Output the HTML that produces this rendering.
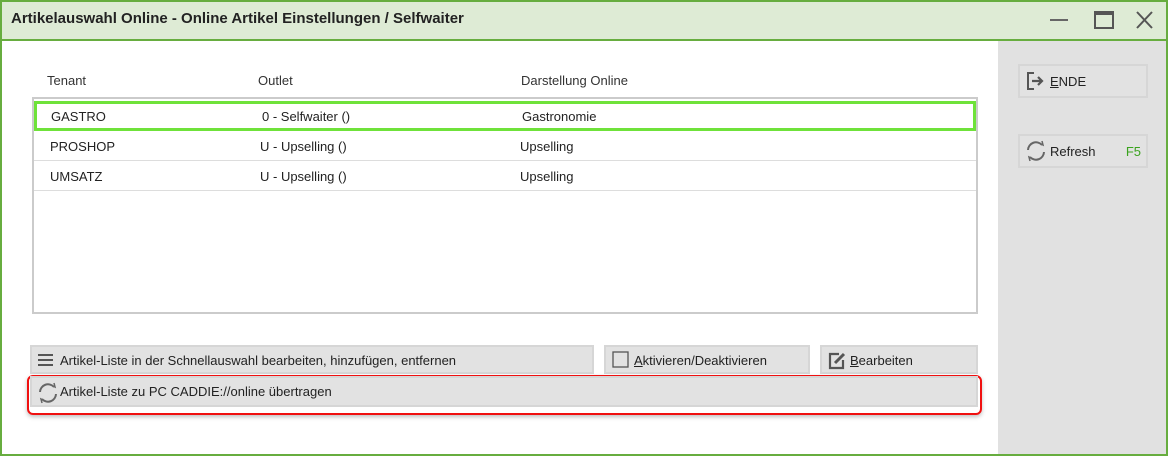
<!DOCTYPE html>
<html><head><style>
*{box-sizing:border-box;margin:0;padding:0}
body{width:1168px;height:456px;overflow:hidden;font-family:"Liberation Sans",sans-serif;font-size:13px;color:#222;background:#fff}
.win{position:absolute;left:0;top:0;width:1168px;height:456px;background:#fff}
.frame{position:absolute;left:0;top:0;width:1168px;height:456px;border:2px solid #67ad3f;pointer-events:none}
.title{position:absolute;left:0;top:0;width:1168px;height:41px;background:#deebd5;border-bottom:2px solid #67ad3f;font-weight:bold;font-size:15px;line-height:38px;padding-left:11px;color:#222}
.side{position:absolute;left:998px;top:41px;width:168px;height:413px;background:#e1e1e1}
.abs{position:absolute}
.hdr{top:73px;color:#333}
.list{position:absolute;left:32px;top:97px;width:946px;height:217px;border:2px solid #cbcbcb;background:#fff}
.row{position:absolute;left:0;width:942px;height:30px;border-bottom:1px solid #ddd}
.row span{position:absolute;top:8px}
.sel{border:3px solid #6fe23a;height:30px;top:2px}
.btn{position:absolute;background:#e2e2e2;border:2px solid #d6d6d6;height:29px;line-height:27px;padding-left:28px;color:#222}
.btn svg{position:absolute;left:5px;top:4px}
</style></head><body>
<div class="win">
<div class="title">Artikelauswahl Online - Online Artikel Einstellungen / Selfwaiter
<svg class="abs" style="left:1048px;top:9px" width="110" height="22"><line x1="2" y1="11" x2="20" y2="11" stroke="#666" stroke-width="2"/><rect x="47" y="3" width="18" height="16" fill="none" stroke="#555" stroke-width="2"/><rect x="47" y="3" width="18" height="3" fill="#555"/><path d="M89 3L104 19M104 3L89 19" stroke="#555" stroke-width="2"/></svg></div>
<div class="side"></div>
<div class="abs hdr" style="left:47px">Tenant</div>
<div class="abs hdr" style="left:258px">Outlet</div>
<div class="abs hdr" style="left:521px">Darstellung Online</div>
<div class="list">
<div class="row sel" style="left:0"><span style="left:14px;top:5px">GASTRO</span><span style="left:225px;top:5px">0 - Selfwaiter ()</span><span style="left:485px;top:5px">Gastronomie</span></div>
<div class="row" style="top:32px"><span style="left:16px">PROSHOP</span><span style="left:226px">U - Upselling ()</span><span style="left:486px">Upselling</span></div>
<div class="row" style="top:62px"><span style="left:16px">UMSATZ</span><span style="left:226px">U - Upselling ()</span><span style="left:486px">Upselling</span></div>
</div>
<div class="btn" style="left:30px;top:345px;width:564px"><svg width="18" height="18"><path d="M1 4H16M1 9H16M1 14H16" stroke="#555" stroke-width="2"/></svg>Artikel-Liste in der Schnellauswahl bearbeiten, hinzufügen, entfernen</div>
<div class="btn" style="left:604px;top:345px;width:206px"><svg width="18" height="18"><rect x="2" y="1" width="15" height="15" fill="none" stroke="#555" stroke-width="1.3"/></svg><u>A</u>ktivieren/Deaktivieren</div>
<div class="btn" style="left:820px;top:345px;width:158px"><svg width="20" height="20"><path d="M12 3H3V17H16V9" fill="none" stroke="#555" stroke-width="2.2"/><path d="M8 12L17 3" stroke="#555" stroke-width="3"/></svg><u>B</u>earbeiten</div>
<div class="abs" style="left:27px;top:375px;width:955px;height:40px;border:2px solid #f01010;border-radius:6px;box-shadow:0 2px 4px rgba(0,0,0,.25)"></div>
<div class="btn" style="left:30px;top:376px;width:948px;height:31px"><svg width="22" height="22"><path d="M3 10A8 8 0 0 1 17 5M19 12A8 8 0 0 1 5 17" fill="none" stroke="#666" stroke-width="2"/><path d="M14 3L18 5L17 1M8 19L4 17L5 21" fill="none" stroke="#666" stroke-width="1.5"/></svg>Artikel-Liste zu PC CADDIE://online übertragen</div>
<div class="btn" style="left:1018px;top:64px;width:130px;height:34px;line-height:31px;padding-left:30px"><svg width="22" height="22"><path d="M9 3H3V19H9" fill="none" stroke="#555" stroke-width="2"/><path d="M7 11H17M13 7L17 11L13 15" fill="none" stroke="#555" stroke-width="2.2"/></svg><u>E</u>NDE</div>
<div class="btn" style="left:1018px;top:134px;width:130px;height:34px;line-height:31px;padding-left:30px"><svg width="22" height="22"><path d="M3 10A8 8 0 0 1 17 5M19 12A8 8 0 0 1 5 17" fill="none" stroke="#666" stroke-width="2"/><path d="M14 3L18 5L17 1M8 19L4 17L5 21" fill="none" stroke="#666" stroke-width="1.5"/></svg>Refresh<span style="position:absolute;right:5px;color:#3aa31e">F5</span></div>
</div>
<div class="frame"></div>
</body></html>
